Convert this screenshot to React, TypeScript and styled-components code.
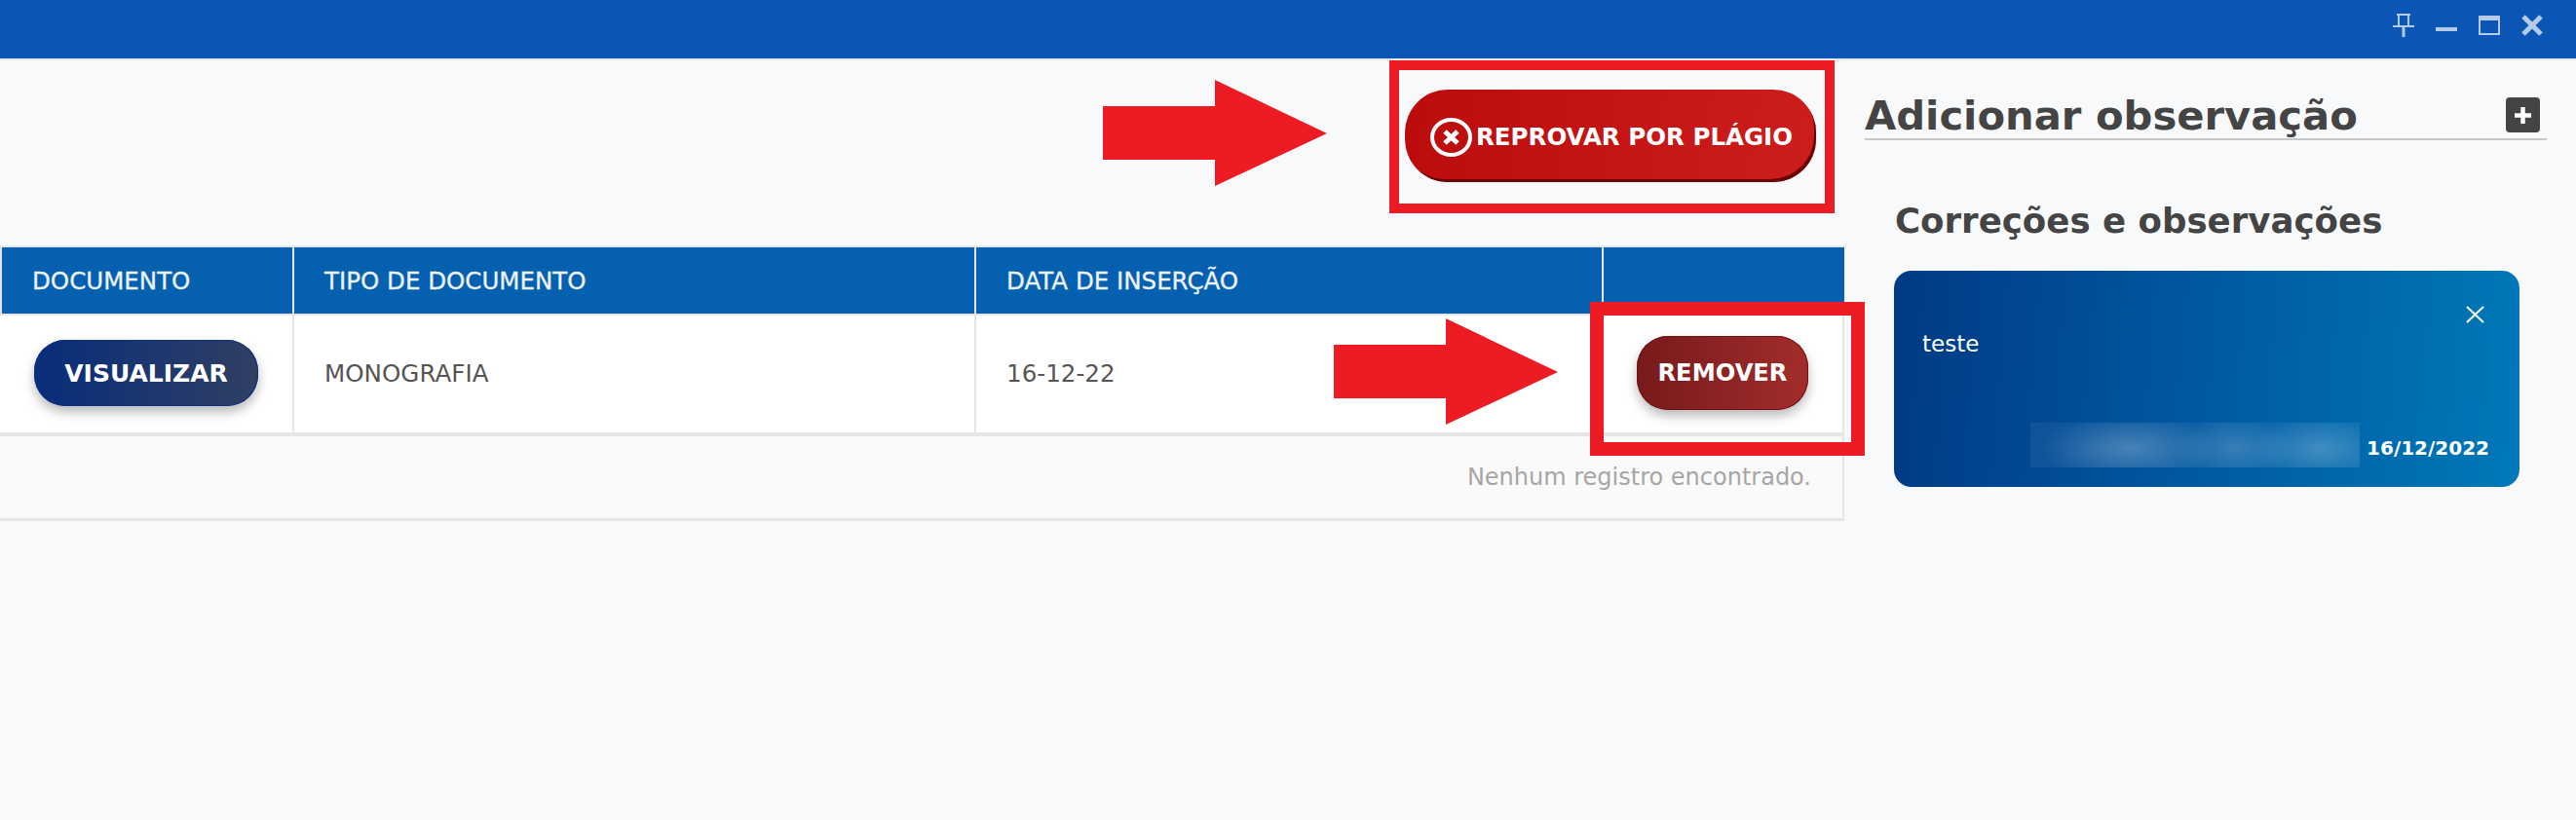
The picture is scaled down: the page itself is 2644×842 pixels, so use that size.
import React from "react";
import styled, { createGlobalStyle } from "styled-components";

const GlobalStyle = createGlobalStyle`
  html, body {
    margin: 0;
    padding: 0;
    background: #f8f9fb;
    font-family: "DejaVu Sans", "Noto Sans", sans-serif;
  }
  * { box-sizing: border-box; }
`;

const Page = styled.div`
  position: relative;
  width: 2644px;
  height: 842px;
  overflow: hidden;
  background: #f8f9fb;
`;

const TitleBar = styled.header`
  display: flex;
  justify-content: flex-end;
  align-items: flex-start;
  gap: 22px;
  height: 62px;
  padding: 14px 34px 0 0;
  background: #0b55b5;
  border-bottom: 2px solid #e6e8ec;
`;

const WinIcon = styled.svg`
  display: block;
  width: 22px;
  height: 24px;
  color: #b4cae9;
`;

const Body = styled.div`
  display: flex;
  align-items: flex-start;
`;

const Main = styled.main`
  width: 1893px;
  flex-shrink: 0;
`;

const Actions = styled.div`
  display: flex;
  justify-content: flex-end;
  height: 190px;
  padding: 30px 29px 0 0;
`;

const RejectButton = styled.button`
  display: flex;
  align-items: center;
  gap: 4px;
  width: 422px;
  height: 95px;
  padding: 2px 0 0 26px;
  border: none;
  border-radius: 44px;
  background: linear-gradient(100deg, #bb0b0c, #cd1d1c);
  box-shadow: inset -3px -4px 0 -1px #6b0505;
  color: #fff;
  font: inherit;
  font-size: 24.5px;
  font-weight: 700;
  white-space: nowrap;
`;

const Table = styled.div`
  display: grid;
  grid-template-columns: 302px 700px 644px 247px;
  border-top: 2px solid #e6e6e6;
`;

const HeadCell = styled.div`
  display: flex;
  align-items: center;
  height: 70px;
  padding-left: 31px;
  background: #0560b0;
  border-right: 2px solid #e6e6e6;
  border-bottom: 2px solid #e6e6e6;
  color: #eef3fa;
  font-size: 24.5px;
  -webkit-text-stroke: 0.3px #eef3fa;
  white-space: nowrap;

  &:first-child {
    border-left: 2px solid #e6e6e6;
    padding-left: 31px;
  }
  &:nth-child(4) {
    border-right: none;
  }
`;

const BodyCell = styled.div<{ $inset?: number }>`
  display: flex;
  align-items: center;
  height: 124px;
  padding-bottom: 2px;
  padding-left: ${({ $inset }) => $inset ?? 31}px;
  background: #fff;
  border-right: 2px solid #e6e6e6;
  border-bottom: 4px solid #e6e6e6;
  color: #555;
  font-size: 24.6px;

  &:first-child {
    border-left: 2px solid #e6e6e6;
  }
`;

const PillButton = styled.button<{ $from: string; $to: string; $edge: string; $w: number; $h: number; $size: number }>`
  width: ${({ $w }) => $w}px;
  height: ${({ $h }) => $h}px;
  padding: 0;
  border: none;
  border-radius: 32px;
  background: linear-gradient(90deg, ${({ $from }) => $from}, ${({ $to }) => $to});
  box-shadow: inset 0 0 0 1px ${({ $edge }) => $edge}, 0 6px 12px rgba(0, 0, 0, 0.28);
  color: #fff;
  font: inherit;
  font-size: ${({ $size }) => $size}px;
  font-weight: 700;
`;

const TableFoot = styled.div`
  display: flex;
  justify-content: flex-end;
  align-items: center;
  height: 87px;
  padding: 0 32px 0 0;
  background: #fafafa;
  border-right: 2px solid #e6e6e6;
  border-bottom: 3px solid #e6e6e6;
  color: #a6a6a6;
  font-size: 24px;
`;

const Aside = styled.aside`
  width: 700px;
  margin-left: 21px;
`;

const AddRow = styled.div`
  display: flex;
  justify-content: space-between;
  align-items: flex-end;
  height: 82px;
  padding: 0 7px 6px 0;
  border-bottom: 2px solid #c6c6c8;
`;

const AddTitle = styled.h2`
  margin: 0 0 -7px;
  color: #444;
  font-size: 41.7px;
  font-weight: 700;
  line-height: 48px;
  white-space: nowrap;
`;

const PlusBox = styled.span`
  display: flex;
  align-items: center;
  justify-content: center;
  width: 35px;
  height: 36px;
  border-radius: 4px;
  background: #444;
`;

const SubTitle = styled.h3`
  margin: 60px 0 0 31px;
  color: #444;
  font-size: 35.6px;
  font-weight: 700;
  line-height: 46px;
  white-space: nowrap;
`;

const NoteCard = styled.article`
  position: relative;
  display: flex;
  flex-direction: column;
  width: 642px;
  height: 222px;
  margin: 28px 0 0 30px;
  padding: 60px 31px 20px 29px;
  border-radius: 18px;
  background: linear-gradient(95deg, #003a84, #004a93 25%, #0060a6 60%, #0079b9);
  color: #fff;
`;

const NoteText = styled.p`
  margin: 0;
  font-size: 23px;
  line-height: 30px;
`;

const CloseIcon = styled.svg`
  position: absolute;
  top: 36px;
  right: 36px;
  width: 19px;
  height: 18px;
`;

const NoteFoot = styled.div`
  display: flex;
  justify-content: flex-end;
  align-items: flex-start;
  gap: 7px;
  margin-top: auto;
`;

const BlurredName = styled.div`
  width: 338px;
  height: 46px;
  background:
    radial-gradient(ellipse 90px 34px at 30% 58%, rgba(170, 195, 225, 0.36), transparent),
    radial-gradient(ellipse 60px 32px at 62% 58%, rgba(170, 195, 225, 0.26), transparent),
    radial-gradient(ellipse 70px 32px at 88% 58%, rgba(170, 205, 230, 0.32), transparent),
    rgba(255, 255, 255, 0.06);
`;

const NoteDate = styled.span`
  margin-top: 14px;
  font-size: 20px;
  font-weight: 700;
  line-height: 24px;
`;

const Frame = styled.div<{ $x: number; $y: number; $w: number; $h: number; $t: number }>`
  position: absolute;
  left: ${({ $x }) => $x}px;
  top: ${({ $y }) => $y}px;
  width: ${({ $w }) => $w}px;
  height: ${({ $h }) => $h}px;
  border: ${({ $t }) => $t}px solid #ed1c24;
  pointer-events: none;
`;

const ArrowSvg = styled.svg<{ $x: number; $y: number }>`
  position: absolute;
  left: ${({ $x }) => $x}px;
  top: ${({ $y }) => $y}px;
  width: 230px;
  height: 109px;
`;

const Arrow = ({ x, y }: { x: number; y: number }) => (
  <ArrowSvg $x={x} $y={y} viewBox="0 0 230 109">
    <polygon fill="#ed1c24" points="0,27 115,27 115,0 230,55 115,109 115,82 0,82" />
  </ArrowSvg>
);

export default function App() {
  return (
    <Page>
      <GlobalStyle />
      <TitleBar>
        <WinIcon viewBox="0 0 22 24" fill="none" stroke="currentColor">
          <path d="M4 1h14" strokeWidth="2" />
          <path d="M6 1v12M16 1v12" strokeWidth="2" />
          <path d="M0 13h22" strokeWidth="2" />
          <path d="M11 14v10" strokeWidth="3" />
        </WinIcon>
        <WinIcon viewBox="0 0 22 24">
          <rect x="0" y="14" width="22" height="4" fill="currentColor" />
        </WinIcon>
        <WinIcon viewBox="0 0 22 24" fill="none" stroke="currentColor">
          <rect x="1" y="3" width="20" height="18" strokeWidth="2" />
          <path d="M0 5h22" strokeWidth="4" />
        </WinIcon>
        <WinIcon viewBox="0 0 22 24" fill="none" stroke="currentColor">
          <path d="M2 3l18 18M20 3L2 21" strokeWidth="5" />
        </WinIcon>
      </TitleBar>

      <Body>
        <Main>
          <Actions>
            <RejectButton>
              <svg width="43" height="40" viewBox="0 0 43 40" fill="none" stroke="#fff">
                <ellipse cx="21.5" cy="20" rx="19.5" ry="18" strokeWidth="4" />
                <path d="M15 14l13 12M28 14L15 26" strokeWidth="5" />
              </svg>
              REPROVAR POR PLÁGIO
            </RejectButton>
          </Actions>

          <Table>
            <HeadCell>DOCUMENTO</HeadCell>
            <HeadCell>TIPO DE DOCUMENTO</HeadCell>
            <HeadCell>DATA DE INSERÇÃO</HeadCell>
            <HeadCell />
            <BodyCell $inset={35}>
              <PillButton $from="#082d7b" $to="#303f63" $edge="#0a3080" $w={230} $h={68} $size={25}>
                VISUALIZAR
              </PillButton>
            </BodyCell>
            <BodyCell>MONOGRAFIA</BodyCell>
            <BodyCell>16-12-22</BodyCell>
            <BodyCell $inset={34}>
              <PillButton $from="#771a1b" $to="#a32c2c" $edge="#6e1214" $w={176} $h={76} $size={24.2}>
                REMOVER
              </PillButton>
            </BodyCell>
          </Table>
          <TableFoot>Nenhum registro encontrado.</TableFoot>
        </Main>

        <Aside>
          <AddRow>
            <AddTitle>Adicionar observação</AddTitle>
            <PlusBox>
              <svg width="19" height="19" viewBox="0 0 19 19">
                <path d="M9.5 1v17M1 9.5h17" stroke="#fff" strokeWidth="4.5" />
              </svg>
            </PlusBox>
          </AddRow>
          <SubTitle>Correções e observações</SubTitle>
          <NoteCard>
            <CloseIcon viewBox="0 0 19 18">
              <path d="M1 1l17 16M18 1L1 17" stroke="#fff" strokeWidth="2" />
            </CloseIcon>
            <NoteText>teste</NoteText>
            <NoteFoot>
              <BlurredName />
              <NoteDate>16/12/2022</NoteDate>
            </NoteFoot>
          </NoteCard>
        </Aside>
      </Body>

      <Arrow x={1132} y={82} />
      <Arrow x={1369} y={327} />
      <Frame $x={1426} $y={62} $w={457} $h={157} $t={10} />
      <Frame $x={1632} $y={310} $w={282} $h={158} $t={14} />
    </Page>
  );
}
